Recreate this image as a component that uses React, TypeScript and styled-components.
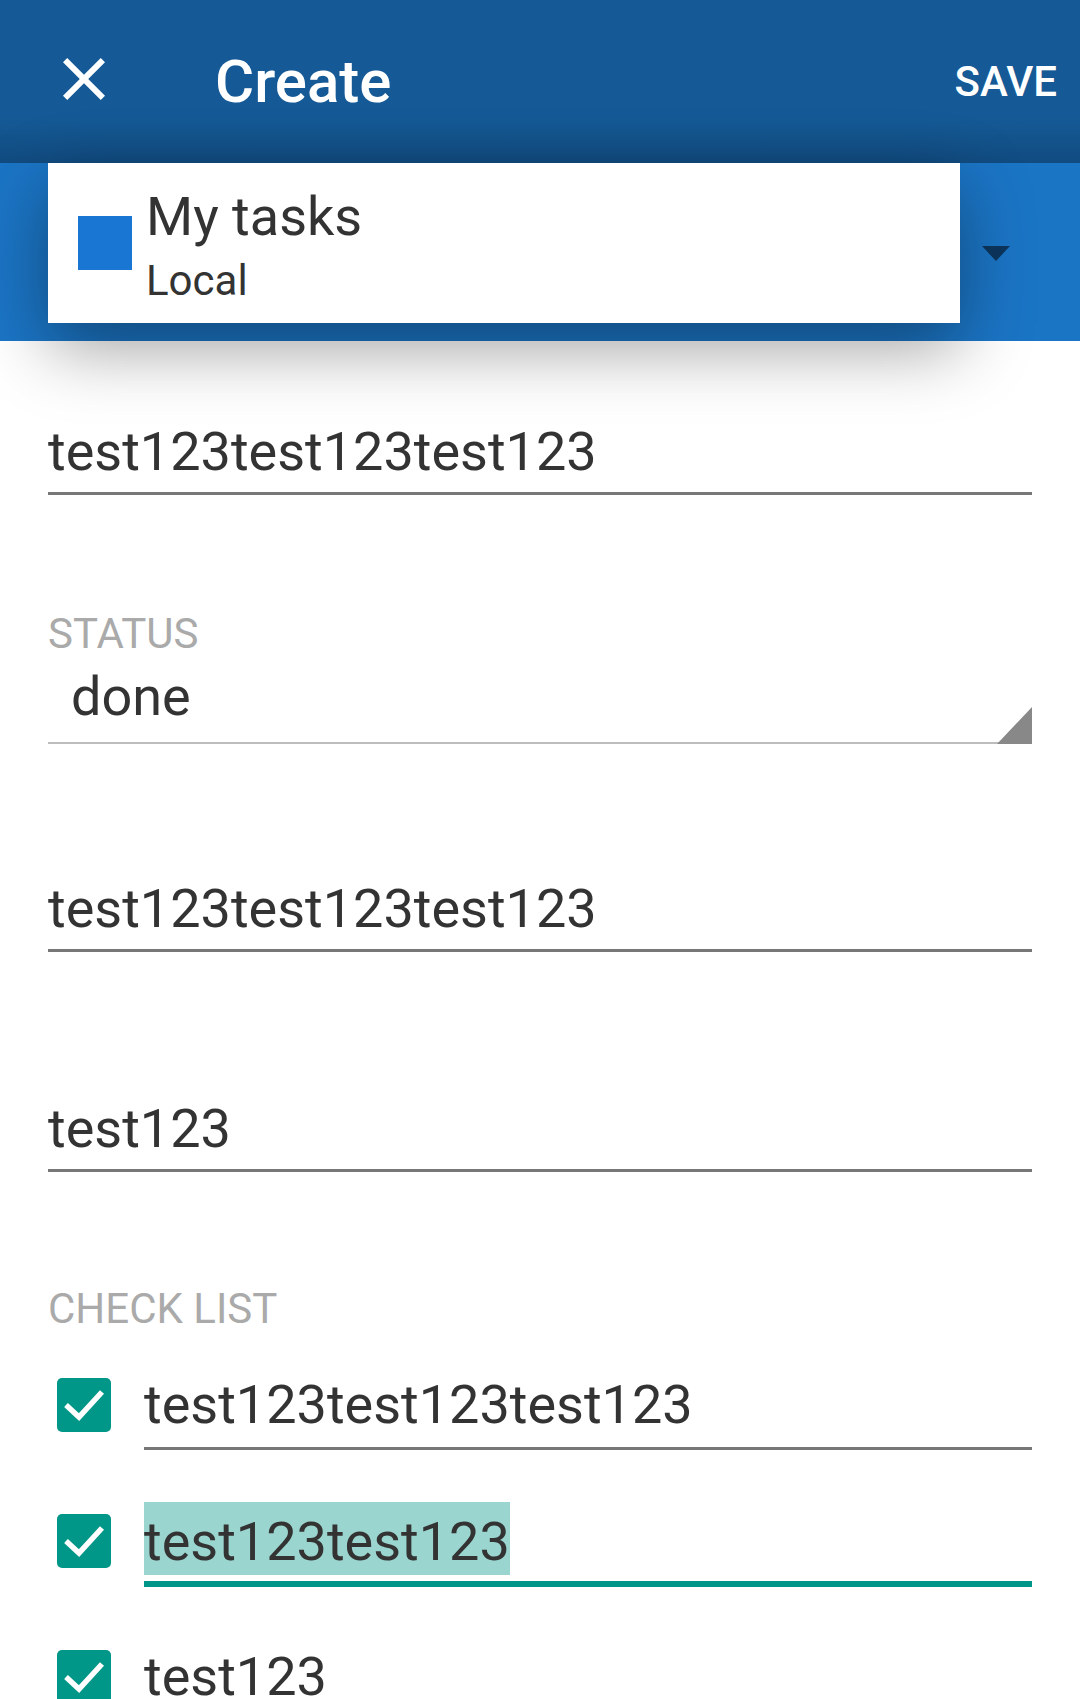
import React from "react";
import styled, { createGlobalStyle } from "styled-components";

const GlobalStyle = createGlobalStyle`
  html, body {
    margin: 0;
    padding: 0;
    overflow: hidden;
    background: #ffffff;
  }
  body {
    font-family: Roboto, "Noto Sans", "Liberation Sans", sans-serif;
  }
  * { box-sizing: border-box; }
`;

const Page = styled.div`
  width: 1080px;
  min-height: 1699px;
  background: #ffffff;
`;

const AppBar = styled.header`
  height: 163px;
  display: flex;
  align-items: center;
  padding: 0 23px 0 48px;
  background: linear-gradient(to bottom, #155a96 0px, #155a96 118px, #114b80 163px);
`;

const CloseButton = styled.button`
  width: 72px;
  height: 72px;
  padding: 0;
  margin: 0 0 5px 0;
  border: none;
  background: transparent;
  display: flex;
  align-items: center;
  justify-content: center;
`;

const Title = styled.h1`
  margin: 0 0 0 95px;
  font-size: 60px;
  font-weight: 500;
  line-height: 1;
  color: #ffffff;
`;

const SaveButton = styled.button`
  margin-left: auto;
  padding: 0;
  border: none;
  background: transparent;
  font-family: inherit;
  font-size: 42px;
  font-weight: 500;
  line-height: 1;
  color: #ffffff;
`;

const SubBar = styled.div`
  height: 178px;
  display: flex;
  align-items: flex-start;
  padding-left: 48px;
  background: #1b75c5;
`;

const AccountCard = styled.div`
  position: relative;
  z-index: 1;
  width: 912px;
  height: 160px;
  display: flex;
  align-items: center;
  padding-left: 30px;
  background: #ffffff;
  box-shadow: 0 24px 70px rgba(0, 0, 0, 0.38);
`;

const Swatch = styled.div<{ $color: string }>`
  width: 54px;
  height: 54px;
  flex: none;
  background: ${(p) => p.$color};
`;

const CardText = styled.div`
  align-self: flex-start;
  padding-top: 24px;
  margin-left: 14px;
  color: #333333;
`;

const CardTitle = styled.div`
  font-size: 54px;
  line-height: 60px;
`;

const CardSub = styled.div`
  margin-top: 10px;
  font-size: 42px;
  line-height: 48px;
`;

const DropArrow = styled.div`
  width: 0;
  height: 0;
  margin: 83px 0 0 22px;
  border-left: 14.5px solid transparent;
  border-right: 14.5px solid transparent;
  border-top: 15px solid #0c365e;
`;

const Content = styled.main`
  padding: 0 48px;
  display: flex;
  flex-direction: column;
`;

const TextField = styled.div<{ $mt: number }>`
  margin-top: ${(p) => p.$mt}px;
  font-size: 54px;
  line-height: 64px;
  color: #333333;
  padding-bottom: 8px;
  border-bottom: 3px solid #777777;
  white-space: nowrap;
`;

const SectionLabel = styled.div<{ $mt: number }>`
  margin-top: ${(p) => p.$mt}px;
  font-size: 42px;
  line-height: 48px;
  color: #aaaaaa;
`;

const Spinner = styled.div`
  position: relative;
  margin-top: 7px;
  padding-left: 23px;
  padding-bottom: 13px;
  font-size: 54px;
  line-height: 64px;
  color: #333333;
  border-bottom: 2px solid #bdbdbd;

  &::after {
    content: "";
    position: absolute;
    right: 0;
    bottom: -2px;
    width: 0;
    height: 0;
    border-left: 35px solid transparent;
    border-bottom: 37px solid #888888;
  }
`;

const CheckRow = styled.div<{ $mt: number }>`
  margin-top: ${(p) => p.$mt}px;
  display: flex;
  align-items: flex-start;
`;

const CheckBox = styled.svg<{ $offset: number }>`
  flex: none;
  width: 54px;
  height: 54px;
  margin: ${(p) => p.$offset}px 0 0 9px;
`;

const CheckInput = styled.div<{ $active?: boolean }>`
  flex: 1;
  display: flex;
  align-items: flex-start;
  margin-left: 33px;
  font-size: 54px;
  line-height: 64px;
  color: #333333;
  white-space: nowrap;
  padding-bottom: ${(p) => (p.$active ? 6 : 10)}px;
  border-bottom: ${(p) => (p.$active ? "6px solid #009688" : "3px solid #777777")};
`;

const Selection = styled.span`
  display: inline-block;
  padding: 8px 0 1px;
  background: #9ad5cf;
`;

const Check: React.FC<{ offset: number }> = ({ offset }) => (
  <CheckBox $offset={offset} viewBox="0 0 54 54">
    <rect x="0" y="0" width="54" height="54" rx="5" fill="#009688" />
    <polyline
      points="9,27 22,39 45,14"
      fill="none"
      stroke="#ffffff"
      strokeWidth="5.5"
      strokeLinecap="butt"
      strokeLinejoin="miter"
    />
  </CheckBox>
);

export default function App() {
  return (
    <Page>
      <GlobalStyle />
      <AppBar>
        <CloseButton aria-label="Close">
          <svg width="72" height="72" viewBox="0 0 24 24">
            <path
              fill="#ffffff"
              d="M19 6.41L17.59 5 12 10.59 6.41 5 5 6.41 10.59 12 5 17.59 6.41 19 12 13.41 17.59 19 19 17.59 13.41 12z"
            />
          </svg>
        </CloseButton>
        <Title>Create</Title>
        <SaveButton>SAVE</SaveButton>
      </AppBar>
      <SubBar>
        <AccountCard>
          <Swatch $color="#1976d2" />
          <CardText>
            <CardTitle>My tasks</CardTitle>
            <CardSub>Local</CardSub>
          </CardText>
        </AccountCard>
        <DropArrow />
      </SubBar>
      <Content>
        <TextField $mt={79}>test123test123test123</TextField>
        <SectionLabel $mt={115}>STATUS</SectionLabel>
        <Spinner>done</Spinner>
        <TextField $mt={133}>test123test123test123</TextField>
        <TextField $mt={145}>test123</TextField>
        <SectionLabel $mt={113}>CHECK LIST</SectionLabel>
        <CheckRow $mt={40}>
          <Check offset={5} />
          <CheckInput>test123test123test123</CheckInput>
        </CheckRow>
        <CheckRow $mt={52}>
          <Check offset={12} />
          <CheckInput $active>
            <Selection>test123test123</Selection>
          </CheckInput>
        </CheckRow>
        <CheckRow $mt={58}>
          <Check offset={5} />
          <CheckInput>test123</CheckInput>
        </CheckRow>
      </Content>
    </Page>
  );
}
